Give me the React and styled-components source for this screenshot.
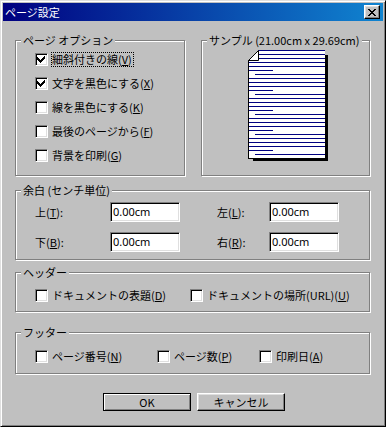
import styled, { createGlobalStyle } from "styled-components";

const GlobalStyle = createGlobalStyle`
  html, body {
    margin: 0;
    padding: 0;
    background: #c0c0c0;
  }
  body {
    font-family: "Noto Sans CJK JP", "Noto Sans", sans-serif;
    font-size: 11px;
    color: #000;
  }
`;

const Window = styled.div`
  box-sizing: border-box;
  width: 386px;
  height: 427px;
  background: #c0c0c0;
  border: 1px solid;
  border-color: #dfdfdf #000 #000 #dfdfdf;
  box-shadow: inset 1px 1px 0 #fff, inset -1px -1px 0 #808080;
  padding: 2px;
  display: flex;
  flex-direction: column;
`;

const TitleBar = styled.div`
  flex: none;
  height: 18px;
  display: flex;
  align-items: center;
  justify-content: space-between;
  padding: 0 3px 0 2px;
  background: linear-gradient(90deg, #000080, #1084d0);
  color: #fff;
  font-size: 11px;
  line-height: 18px;
`;

const CloseButton = styled.div`
  box-sizing: border-box;
  width: 16px;
  height: 14px;
  background: #c0c0c0;
  border: 1px solid;
  border-color: #fff #000 #000 #fff;
  box-shadow: inset -1px -1px 0 #808080, inset 1px 1px 0 #dfdfdf;
  display: flex;
  align-items: center;
  justify-content: center;
`;

const Client = styled.div`
  flex: 1;
  display: flex;
  flex-direction: column;
  padding: 13px 13px 0 12px;
`;

const TopRow = styled.div`
  display: flex;
  gap: 16px;
`;

const Group = styled.fieldset`
  box-sizing: border-box;
  margin: ${(p) => p.$mt || 0}px 0 0 0;
  padding: 0;
  width: ${(p) => p.$w || 355}px;
  min-width: 0;
  border: 1px solid #808080;
  box-shadow: 1px 1px 0 #fff, inset 1px 1px 0 #fff;
`;

const Legend = styled.legend`
  margin-left: 5px;
  padding: 0 2px;
  height: 13px;
  line-height: 13px;
  background: #c0c0c0;
  white-space: nowrap;
`;

const OptionList = styled.div`
  display: flex;
  flex-direction: column;
  padding: 0 0 6px 19px;
`;

const CheckRow = styled.div`
  height: 24px;
  display: flex;
  align-items: center;
`;

const CheckItem = styled.div`
  display: flex;
  align-items: center;
  gap: 3px;
  width: ${(p) => (p.$w ? p.$w + "px" : "auto")};
  flex: none;
`;

const Box = styled.span`
  box-sizing: border-box;
  width: 13px;
  height: 13px;
  flex: none;
  background: #fff;
  border: 1px solid;
  border-color: #808080 #fff #fff #808080;
  box-shadow: inset 1px 1px 0 #000, inset -1px -1px 0 #dfdfdf;
  display: flex;
`;

const Label = styled.span`
  border: 1px dotted ${(p) => (p.$focus ? "#000" : "transparent")};
  padding: 0 1px 0 0;
  line-height: 13px;
  white-space: nowrap;
`;

const SampleArea = styled.div`
  padding: 1px 0 0 44px;
  height: 127px;
`;

const MarginBody = styled.div`
  display: flex;
  flex-direction: column;
  gap: 10px;
  padding: 5px 0 7px 19px;
`;

const FieldRow = styled.div`
  display: flex;
  align-items: center;
  height: 20px;
`;

const FieldLabel = styled.span`
  width: ${(p) => p.$w}px;
  flex: none;
`;

const Input = styled.div`
  box-sizing: border-box;
  width: 70px;
  height: 20px;
  flex: none;
  background: #fff;
  border: 1px solid;
  border-color: #808080 #fff #fff #808080;
  box-shadow: inset 1px 1px 0 #000, inset -1px -1px 0 #dfdfdf;
  padding: 0 2px;
  line-height: 18px;
  font-family: "Noto Sans", sans-serif;
`;

const Spacer = styled.span`
  width: ${(p) => p.$w}px;
  flex: none;
`;

const InlineBody = styled.div`
  display: flex;
  align-items: center;
  height: 24px;
  padding: ${(p) => p.$pt}px 0 ${(p) => p.$pb}px 19px;
`;

const ButtonRow = styled.div`
  display: flex;
  gap: 6px;
  margin: 19px 0 0 88px;
`;

const Button = styled.div`
  box-sizing: border-box;
  width: 88px;
  height: 18px;
  background: #c0c0c0;
  border: 1px solid;
  border-color: ${(p) => (p.$default ? "#000" : "#fff #000 #000 #fff")};
  box-shadow: ${(p) =>
    p.$default
      ? "inset 1px 1px 0 #fff, inset -1px -1px 0 #808080"
      : "inset -1px -1px 0 #808080, inset 1px 1px 0 #dfdfdf"};
  display: flex;
  align-items: center;
  justify-content: center;
  line-height: 16px;
`;

function Check({ checked }) {
  return (
    <Box>
      {checked && (
        <svg width="11" height="11" viewBox="0 0 11 11" shapeRendering="crispEdges">
          <path
            d="M8 2h1v3h-1v1h-1v1h-1v1h-1v1h-1v-1h-1v-1h-1v-1h-1v-3h1v1h1v1h1v1h1v-1h1v-1h1v-1h1z"
            fill="#000"
          />
        </svg>
      )}
    </Box>
  );
}

function CheckOption({ checked, focus, w, children }) {
  return (
    <CheckItem $w={w}>
      <Check checked={checked} />
      <Label $focus={focus}>{children}</Label>
    </CheckItem>
  );
}

function CloseGlyph() {
  const rows = [
    [0, 1, 6, 7],
    [1, 2, 5, 6],
    [2, 3, 4, 5],
    [3, 4],
    [2, 3, 4, 5],
    [1, 2, 5, 6],
    [0, 1, 6, 7],
  ];
  return (
    <svg width="8" height="7" viewBox="0 0 8 7" shapeRendering="crispEdges">
      {rows.map((cols, y) =>
        cols.map((x) => <rect key={y + "-" + x} x={x} y={y} width="1" height="1" fill="#000" />)
      )}
    </svg>
  );
}

function SamplePage() {
  const lines = [];
  for (let y = 54; y <= 154; y += 4) {
    const k = (y - 70) / 4;
    const m = ((k % 5) + 5) % 5;
    let x1 = 248;
    let x2 = 325;
    if (y >= 70 && m === 0) x2 = 273;
    if (y >= 70 && m === 1) x1 = 255;
    if (y < 60) x1 = 248 + (60 - y) + 1;
    lines.push(<rect key={y} x={x1} y={y} width={x2 - x1} height="1" fill="#000080" />);
  }
  return (
    <svg width="84" height="115" viewBox="246 48 84 115" shapeRendering="crispEdges">
      <rect x="253" y="55" width="75" height="106" fill="#000" />
      <path d="M258 50H325V158H248V60Z" fill="#fff" />
      <rect x="258" y="50" width="67" height="1" fill="#000080" />
      {lines}
      <rect x="248" y="60" width="1" height="99" fill="#000" />
      <rect x="248" y="158" width="77" height="1" fill="#000" />
      <path d="M248.5 60.5L258.5 50.5V60.5Z" fill="#fff" stroke="#000" strokeWidth="1" shapeRendering="auto" />
    </svg>
  );
}

export default function App() {
  return (
    <>
      <GlobalStyle />
      <Window>
        <TitleBar>
          <span>ページ設定</span>
          <CloseButton>
            <CloseGlyph />
          </CloseButton>
        </TitleBar>
        <Client>
          <TopRow>
            <Group $w={170}>
              <Legend>ページ オプション</Legend>
              <OptionList>
                <CheckRow>
                  <CheckOption checked focus>
                    細斜付きの線(<u>V</u>)
                  </CheckOption>
                </CheckRow>
                <CheckRow>
                  <CheckOption checked>
                    文字を黒色にする(<u>X</u>)
                  </CheckOption>
                </CheckRow>
                <CheckRow>
                  <CheckOption>
                    線を黒色にする(<u>K</u>)
                  </CheckOption>
                </CheckRow>
                <CheckRow>
                  <CheckOption>
                    最後のページから(<u>F</u>)
                  </CheckOption>
                </CheckRow>
                <CheckRow>
                  <CheckOption>
                    背景を印刷(<u>G</u>)
                  </CheckOption>
                </CheckRow>
              </OptionList>
            </Group>
            <Group $w={169}>
              <Legend>サンプル (21.00cm x 29.69cm)</Legend>
              <SampleArea>
                <SamplePage />
              </SampleArea>
            </Group>
          </TopRow>

          <Group $mt={8}>
            <Legend>余白 (センチ単位)</Legend>
            <MarginBody>
              <FieldRow>
                <FieldLabel $w={75}>
                  上(<u>T</u>):
                </FieldLabel>
                <Input>0.00cm</Input>
                <Spacer $w={37} />
                <FieldLabel $w={52}>
                  左(<u>L</u>):
                </FieldLabel>
                <Input>0.00cm</Input>
              </FieldRow>
              <FieldRow>
                <FieldLabel $w={75}>
                  下(<u>B</u>):
                </FieldLabel>
                <Input>0.00cm</Input>
                <Spacer $w={37} />
                <FieldLabel $w={52}>
                  右(<u>R</u>):
                </FieldLabel>
                <Input>0.00cm</Input>
              </FieldRow>
            </MarginBody>
          </Group>

          <Group $mt={6}>
            <Legend>ヘッダー</Legend>
            <InlineBody $pt={4} $pb={4}>
              <CheckOption w={155}>
                ドキュメントの表題(<u>D</u>)
              </CheckOption>
              <CheckOption>
                ドキュメントの場所(URL)(<u>U</u>)
              </CheckOption>
            </InlineBody>
          </Group>

          <Group $mt={14}>
            <Legend>フッター</Legend>
            <InlineBody $pt={5} $pb={5}>
              <CheckOption w={122}>
                ページ番号(<u>N</u>)
              </CheckOption>
              <CheckOption w={102}>
                ページ数(<u>P</u>)
              </CheckOption>
              <CheckOption>
                印刷日(<u>A</u>)
              </CheckOption>
            </InlineBody>
          </Group>

          <ButtonRow>
            <Button $default>OK</Button>
            <Button>キャンセル</Button>
          </ButtonRow>
        </Client>
      </Window>
    </>
  );
}
